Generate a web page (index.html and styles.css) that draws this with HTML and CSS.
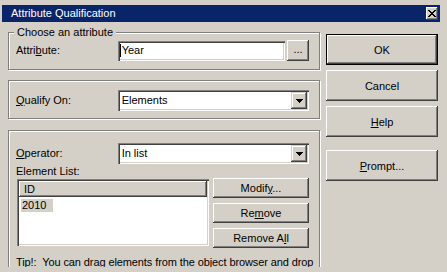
FILE: index.html
```html
<!DOCTYPE html>
<html lang="en">
<head>
    <meta charset="UTF-8">
    <meta name="viewport" content="width=device-width, initial-scale=1.0">
    <title>Attribute Qualification</title>
    <link rel="stylesheet" href="styles.css">
</head>
<body>

    <div class="window">
        <div class="titlebar">
            <span class="title">Attribute Qualification</span>
            <button class="close-btn" title="Close">
                <svg width="8" height="7" viewBox="0 0 8 7"><path d="M0 0h2v1H0zM6 0h2v1H6zM1 1h2v1H1zM5 1h2v1H5zM2 2h4v1H2zM3 3h2v1H3zM2 4h4v1H2zM1 5h2v1H1zM5 5h2v1H5zM0 6h2v1H0zM6 6h2v1H6z"/></svg>
            </button>
        </div>

        <div class="client">
            <div class="main">
                <fieldset class="group group-attr">
                    <legend>Choose an attribute</legend>
                    <div class="row">
                        <label class="field-label">Attri<u>b</u>ute:</label>
                        <div class="textbox"><span class="caret"></span>Year</div>
                        <button class="btn btn-browse">...</button>
                    </div>
                </fieldset>

                <fieldset class="group group-qualify">
                    <div class="row">
                        <label class="field-label"><u>Q</u>ualify On:</label>
                        <div class="combo">
                            <span class="combo-text">Elements</span>
                            <span class="combo-btn"><svg width="7" height="4" viewBox="0 0 7 4"><path d="M0 0h7v1H0zM1 1h5v1H1zM2 2h3v1H2zM3 3h1v1H3z"/></svg></span>
                        </div>
                    </div>
                </fieldset>

                <fieldset class="group group-operator">
                    <div class="row">
                        <label class="field-label"><u>O</u>perator:</label>
                        <div class="combo">
                            <span class="combo-text">In list</span>
                            <span class="combo-btn"><svg width="7" height="4" viewBox="0 0 7 4"><path d="M0 0h7v1H0zM1 1h5v1H1zM2 2h3v1H2zM3 3h1v1H3z"/></svg></span>
                        </div>
                    </div>
                    <div class="list-label">Element List:</div>
                    <div class="list-row">
                        <div class="listbox">
                            <div class="list-header">ID</div>
                            <div class="list-item"><span class="selected">2010</span></div>
                        </div>
                        <div class="list-buttons">
                            <button class="btn btn-list">Modif<u>y</u>...</button>
                            <button class="btn btn-list">Re<u>m</u>ove</button>
                            <button class="btn btn-list">Remove A<u>l</u>l</button>
                        </div>
                    </div>
                    <p class="tip">Tip!:&nbsp; You can drag elements from the object browser and drop them onto the list above.</p>
                </fieldset>
            </div>

            <div class="side">
                <button class="btn btn-big btn-default">OK</button>
                <button class="btn btn-big">Cancel</button>
                <button class="btn btn-big"><u>H</u>elp</button>
                <button class="btn btn-big btn-prompt"><u>P</u>rompt...</button>
            </div>
        </div>
    </div>

</body>
</html>
```

FILE: styles.css
```css
html, body {
    margin: 0;
    padding: 0;
}
body {
    width: 447px;
    height: 272px;
    overflow: hidden;
    background-color: #d4d0c8;
    font-family: 'Liberation Sans', Arial, sans-serif;
    font-size: 11px;
    line-height: 13px;
    color: #000;
}
u {
    text-decoration: underline;
    text-underline-offset: 1px;
}

/* title bar */
.window {
    padding-top: 5px;
}
.titlebar {
    height: 17px;
    margin: 0 7px 0 2px;
    padding: 0 2px 0 9px;
    background-color: #0a246a;
    color: #fff;
    display: flex;
    align-items: center;
    justify-content: space-between;
}
.close-btn {
    width: 12px;
    height: 13px;
    padding: 0;
    border: none;
    background-color: #d4d0c8;
    box-shadow: inset -1px -1px #404040, inset 1px 1px #fff, inset -2px -2px #808080;
    display: flex;
    align-items: center;
    justify-content: center;
}

/* layout */
.client {
    display: flex;
    gap: 5px;
    padding: 4px 0 0 8px;
}
.main {
    width: 313px;
    height: 241px;
    overflow: hidden;
    display: flex;
    flex-direction: column;
}
.side {
    width: 112px;
    padding-top: 8px;
    display: flex;
    flex-direction: column;
    gap: 5px;
}

/* group boxes */
.group {
    margin: 0 1px 0 0;
    padding: 0 10px 0 7px;
    min-width: 0;
    border: 1px solid #808080;
    box-shadow: 1px 1px 0 #fff, inset 1px 1px 0 #fff;
}
.group legend {
    margin-left: -2px;
    padding: 0 3px;
    background-color: #d4d0c8;
}
.group-attr {
    padding-top: 1px;
    padding-bottom: 8px;
}
.group-qualify {
    margin-top: 10px;
    padding-top: 9px;
    padding-bottom: 7px;
}
.group-operator {
    margin-top: 11px;
    padding-top: 12px;
    height: 200px;
}
.row {
    display: flex;
    align-items: center;
    height: 21px;
}
.field-label {
    width: 102px;
}

/* inputs */
.textbox, .combo {
    box-sizing: border-box;
    height: 20px;
    background-color: #fff;
    box-shadow: inset 1px 1px #808080, inset 2px 2px #404040, inset -1px -1px #fff, inset -2px -2px #d4d0c8;
    display: flex;
    align-items: center;
}
.textbox {
    width: 168px;
    padding-left: 2px;
}
.caret {
    width: 1px;
    height: 13px;
    background-color: #000;
    margin-right: 1px;
}
.combo {
    width: 192px;
    height: 21px;
    padding: 2px 2px 2px 4px;
    justify-content: space-between;
}
.combo-btn {
    width: 16px;
    height: 17px;
    background-color: #d4d0c8;
    box-shadow: inset -1px -1px #404040, inset 1px 1px #d4d0c8, inset -2px -2px #808080, inset 2px 2px #fff;
    display: flex;
    align-items: center;
    justify-content: center;
}

/* buttons */
.btn {
    font-family: inherit;
    font-size: 11px;
    color: #000;
    padding: 0;
    border: none;
    background-color: #d4d0c8;
    box-shadow: inset -1px -1px #404040, inset 1px 1px #fff, inset -2px -2px #808080;
}
.btn-browse {
    width: 22px;
    height: 21px;
    margin-left: 2px;
    padding-bottom: 3px;
}
.btn-big {
    height: 31px;
}
.btn-default {
    box-shadow: inset 0 0 0 1px #000, inset -2px -2px #404040, inset 2px 2px #fff, inset -3px -3px #808080;
}
.btn-prompt {
    margin-top: 8px;
}

/* element list */
.list-label {
    margin-top: 1px;
}
.list-row {
    display: flex;
    align-items: flex-start;
    gap: 4px;
    margin-top: 1px;
}
.listbox {
    box-sizing: border-box;
    width: 199px;
    height: 67px;
    margin-left: 1px;
    padding: 2px;
    background-color: #fff;
    box-shadow: inset 1px 1px #808080, inset 2px 2px #404040, inset -1px -1px #fff, inset -2px -2px #d4d0c8;
}
.list-header {
    height: 16px;
    padding-left: 5px;
    display: flex;
    align-items: center;
    background-color: #d4d0c8;
    box-shadow: inset -1px -1px #404040, inset 1px 1px #fff, inset -2px -2px #808080;
}
.list-item {
    padding: 2px 0 0 2px;
}
.selected {
    display: inline-block;
    width: 31px;
    padding-left: 1px;
    background-color: #d4d0c8;
}
.list-buttons {
    display: flex;
    flex-direction: column;
    gap: 5px;
    margin-top: -1px;
}
.btn-list {
    width: 96px;
    height: 20px;
}
.tip {
    margin: 8px -14px 0 0;
    letter-spacing: -0.1px;
}
```
